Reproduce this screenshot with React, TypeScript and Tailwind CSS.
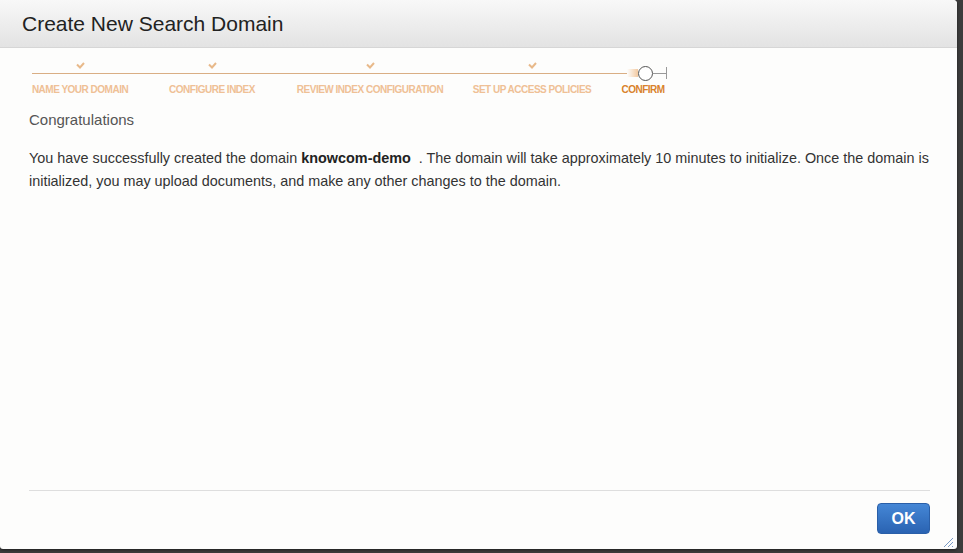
import React from 'react';

const steps = [
  { label: 'NAME YOUR DOMAIN', w: 'w-[96px]', done: true },
  { label: 'CONFIGURE INDEX', w: 'w-[168px]', done: true },
  { label: 'REVIEW INDEX CONFIGURATION', w: 'w-[148px]', done: true },
  { label: 'SET UP ACCESS POLICIES', w: 'w-[176px]', done: true },
  { label: 'CONFIRM', w: 'w-[46px]', done: false },
];

function Check() {
  return (
    <svg width="9" height="7" viewBox="0 0 9 7">
      <path d="M1 2.5 L4 5.5 L8 1" fill="none" stroke="#e8b98a" strokeWidth="2" />
    </svg>
  );
}

export default function App() {
  return (
    <div className="w-[963px] h-[553px] bg-[#3c3c3c] overflow-hidden" style={{ fontFamily: '"Liberation Sans", Arial, sans-serif' }}>
      <div className="w-[957px] h-[549px] bg-[#fdfdfc] rounded-tr-[4px] rounded-b-[3px] flex flex-col shadow-[0_1px_3px_rgba(0,0,0,0.5)]">
        {/* Header */}
        <div className="h-[48px] flex items-center pl-[22px] border-b border-[#d6d6d6] bg-gradient-to-b from-[#f8f8f8] to-[#e3e3e3] rounded-tr-[4px]">
          <h1 className="text-[21px] text-[#222] leading-none">Create New Search Domain</h1>
        </div>

        {/* Stepper */}
        <div className="pl-[32px] pt-[13px]">
          <div className="flex h-[8px] items-end">
            {steps.map((s) => (
              <div key={s.label} className={`${s.w} flex justify-center`}>
                {s.done && <Check />}
              </div>
            ))}
          </div>
          <div className="flex items-center h-[16px] mt-[-4px]">
            <div className="w-[595px] h-[1px] bg-[#d9ae84]" />
            <div className="w-[11px] h-[8px] bg-gradient-to-r from-[#d9ae84]/0 to-[#f3c9a0]" />
            <div className="w-[15px] h-[15px] rounded-full border-[1.5px] border-[#555] bg-white" />
            <div className="w-[13px] h-[1px] bg-[#999]" />
            <div className="w-[1px] h-[12px] bg-[#999]" />
          </div>
          <div className="flex mt-[3px]">
            {steps.map((s) => (
              <div
                key={s.label}
                className={`${s.w} flex justify-center whitespace-nowrap text-[10px] leading-[12px] font-bold tracking-[-0.5px] ${s.done ? 'text-[#efc095]' : 'text-[#d9822b]'}`}
              >
                {s.label}
              </div>
            ))}
          </div>
        </div>

        {/* Content */}
        <div className="flex-1 pl-[29px] pr-[27px] flex flex-col">
          <p className="mt-[15px] text-[15px] text-[#555] leading-[18px]">Congratulations</p>
          <p className="mt-[18px] text-[14.4px] text-[#333] leading-[23px]">
            You have successfully created the domain <b className="text-[#222]">knowcom-demo</b>&nbsp; . The domain will take approximately 10 minutes to initialize. Once the domain is initialized, you may upload documents, and make any other changes to the domain.
          </p>
          <div className="flex-1" />
          <div className="border-t border-[#dedede] h-[59px] flex justify-end items-start pt-[12px] relative">
            <button className="w-[53px] h-[31px] rounded-[4px] bg-gradient-to-b from-[#4587d6] to-[#2a63b2] border border-[#2a5fa8] text-white font-bold text-[16px] leading-none">
              OK
            </button>
            <svg className="absolute right-[-24px] bottom-[1px]" width="12" height="12" viewBox="0 0 12 12">
              <path d="M11 2 L2 11 M11 6 L6 11 M11 10 L10 11" stroke="#7a9ac4" strokeWidth="1" />
            </svg>
          </div>
        </div>
      </div>
    </div>
  );
}
